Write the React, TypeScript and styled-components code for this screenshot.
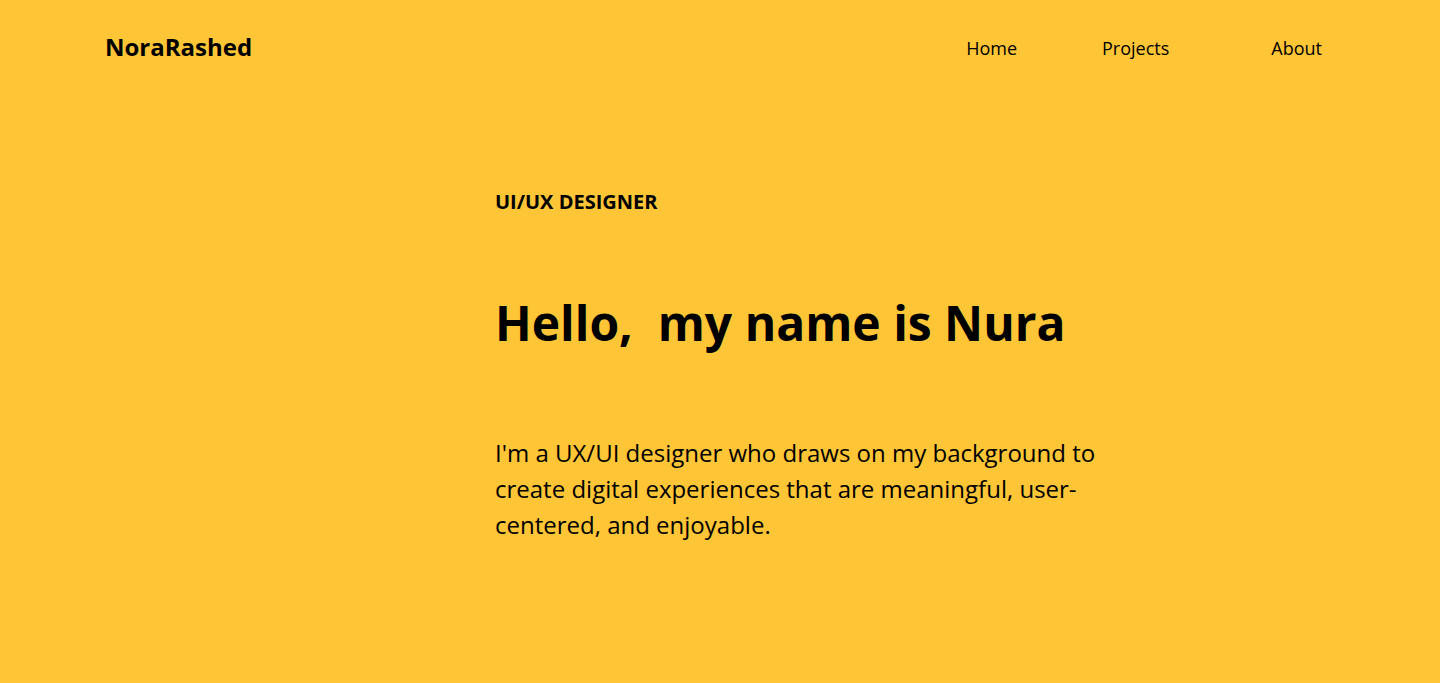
import { createGlobalStyle, styled } from "styled-components";

const GlobalStyle = createGlobalStyle`
  html, body {
    margin: 0;
    padding: 0;
    background-color: #fec536;
    font-family: "Open Sans", "Liberation Sans", sans-serif;
    color: #000;
  }
`;

const links = [
  { label: "Home", space: 0 },
  { label: "Projects", space: 85 },
  { label: "About", space: 102 },
];

const App = () => {
  return (
    <Page>
      <GlobalStyle />
      <Header>
        <Logo>NoraRashed</Logo>
        <Nav>
          {links.map((link) => (
            <NavLink key={link.label} href="#" $space={link.space}>
              {link.label}
            </NavLink>
          ))}
        </Nav>
      </Header>
      <Hero>
        <Tag>UI/UX DESIGNER</Tag>
        <Title>Hello,&nbsp; my name is Nura</Title>
        <Intro>
          I'm a UX/UI designer who draws on my background to create digital
          experiences that are meaningful, user-centered, and enjoyable.
        </Intro>
      </Hero>
    </Page>
  );
};

const Page = styled.div`
  min-height: 683px;
  background-color: #fec536;
`;

const Header = styled.header`
  display: flex;
  justify-content: space-between;
  align-items: center;
  height: 36px;
  padding: 30px 118px 0 105px;
`;

const Logo = styled.div`
  margin-top: -3px;
  font-size: 24px;
  font-weight: 700;
  line-height: 36px;
`;

const Nav = styled.nav`
  display: flex;
  align-items: center;
`;

const NavLink = styled.a<{ $space: number }>`
  margin-left: ${(p) => p.$space}px;
  font-size: 18px;
  line-height: 36px;
  color: #000;
  text-decoration: none;
`;

const Hero = styled.main`
  display: flex;
  flex-direction: column;
  padding: 124px 0 0 495px;
`;

const Tag = styled.h3`
  margin: 0;
  font-size: 20px;
  font-weight: 700;
  line-height: 24px;
`;

const Title = styled.h1`
  margin: 75px 0 0;
  font-size: 48px;
  font-weight: 700;
  line-height: 68px;
`;

const Intro = styled.p`
  margin: 78px 0 0;
  max-width: 620px;
  font-size: 24px;
  line-height: 36px;
`;

export default App;
